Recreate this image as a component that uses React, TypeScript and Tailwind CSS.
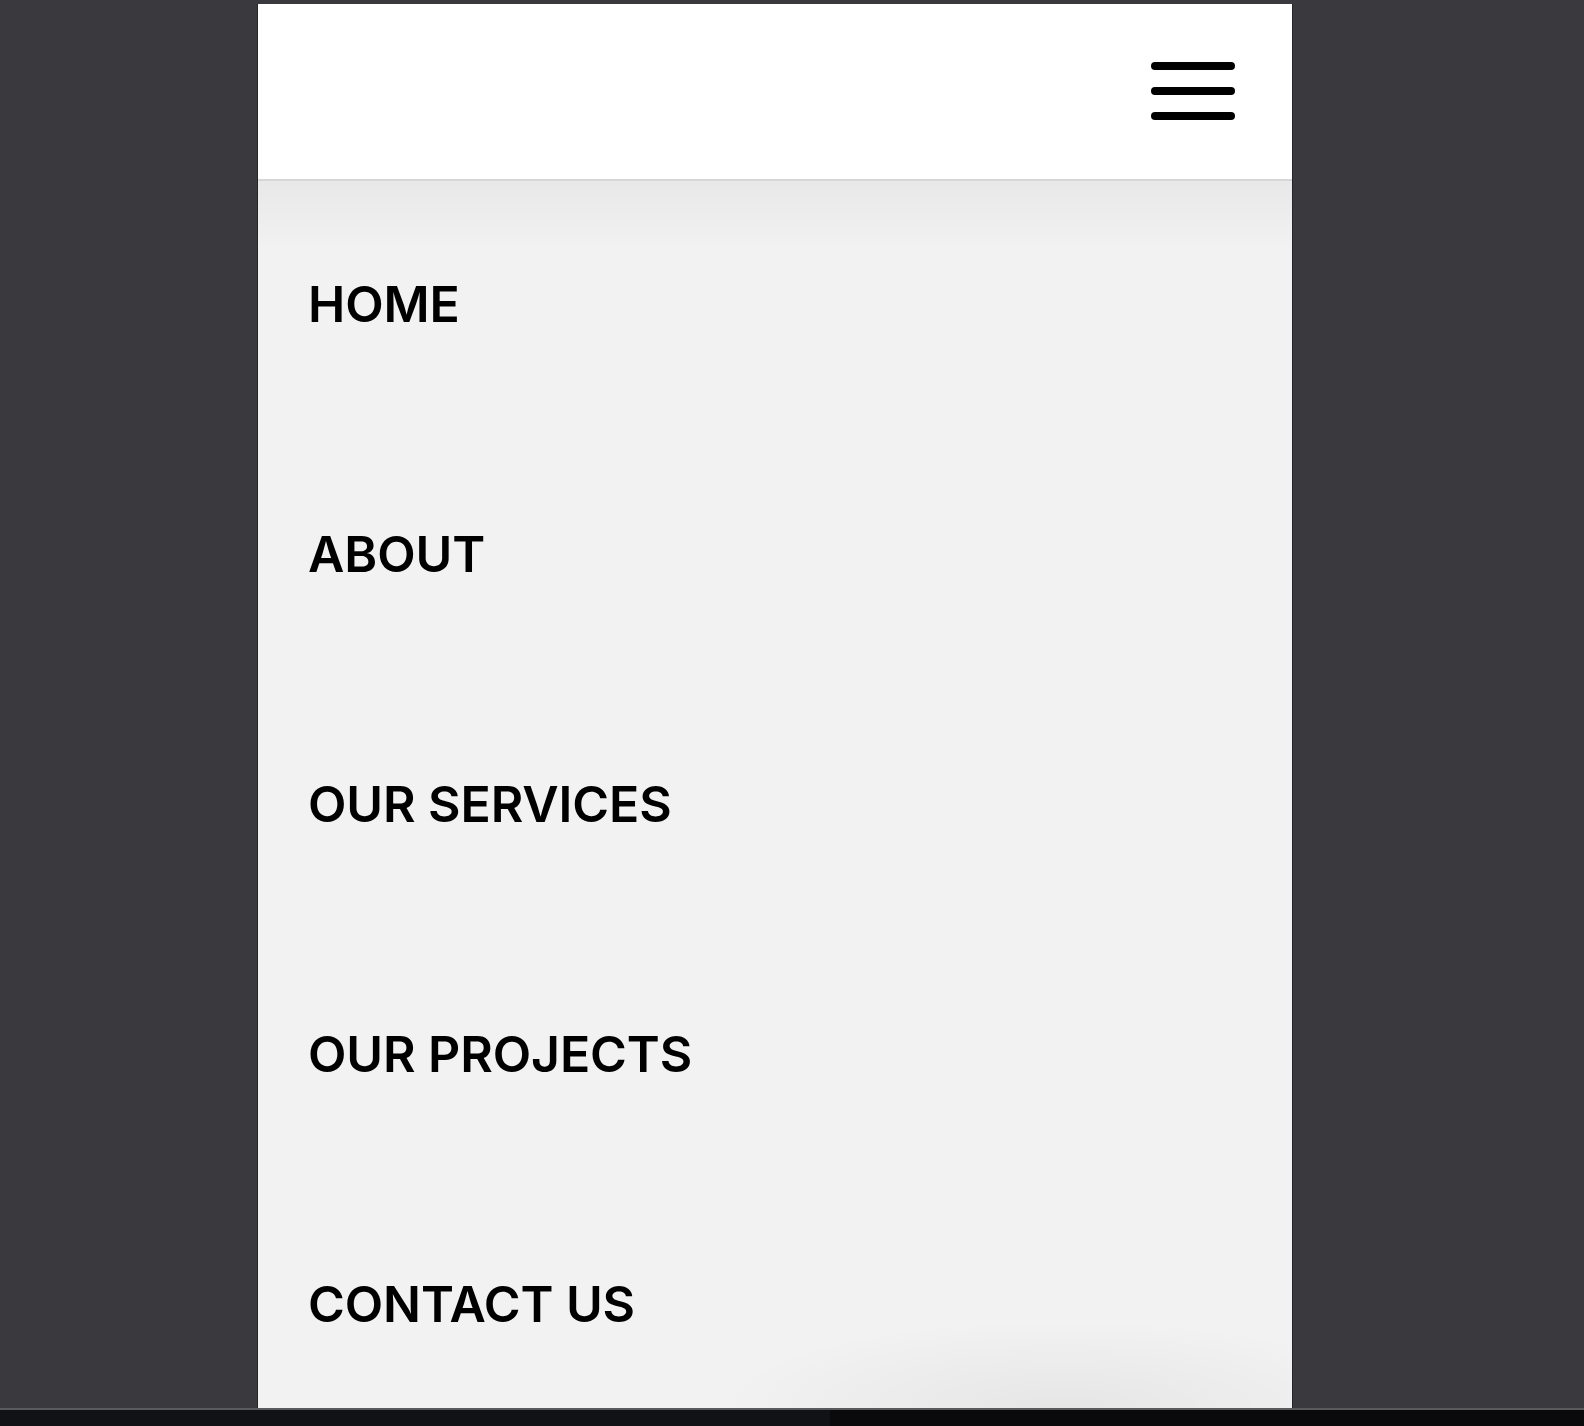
export default function App() {
  const items = ["HOME", "ABOUT", "OUR SERVICES", "OUR PROJECTS", "CONTACT US"];

  return (
    <div className="w-[1584px] h-[1426px] bg-[#3a3a3e] flex flex-col overflow-hidden">
      <div className="flex-1 flex pt-[4px] pl-[257px] min-h-0">
        {/* phone frame */}
        <div className="w-[1036px] h-full border-x border-[#26262a] flex flex-col overflow-hidden relative">
          <header className="h-[177px] shrink-0 bg-white border-b-2 border-[#d6d6d6] flex items-center justify-end pr-[57px]">
            <button className="flex flex-col gap-[17px] mt-[-2px]">
              <span className="block w-[84px] h-[8px] rounded-full bg-black" />
              <span className="block w-[84px] h-[8px] rounded-full bg-black" />
              <span className="block w-[84px] h-[8px] rounded-full bg-black" />
            </button>
          </header>
          <nav className="flex-1 bg-[#f2f2f2] relative overflow-hidden">
            <div className="absolute inset-x-0 top-0 h-[70px] bg-gradient-to-b from-[#e8e8e8] to-[#f2f2f2]" />
            <div className="absolute right-[-120px] bottom-[-90px] w-[700px] h-[180px] rounded-full bg-[radial-gradient(ellipse_at_center,rgba(0,0,0,0.05),rgba(0,0,0,0)_70%)]" />
            <ul className="relative flex flex-col mt-[-2px]">
              {items.map((item) => (
                <li key={item} className="h-[250px] shrink-0 flex items-center pl-[50px]">
                  <a
                    href="#"
                    className="text-[50px] font-semibold text-black tracking-[-0.1px]"
                    style={{ fontFamily: "Inter, 'Noto Sans', sans-serif" }}
                  >
                    {item}
                  </a>
                </li>
              ))}
            </ul>
          </nav>
        </div>
      </div>
      <div className="h-[2px] bg-[#5a5a5c] shrink-0" />
      <div className="h-[16px] shrink-0 flex">
        <div className="w-[830px] bg-[#111215]" />
        <div className="flex-1 bg-[#0a0a0c]" />
      </div>
    </div>
  );
}
